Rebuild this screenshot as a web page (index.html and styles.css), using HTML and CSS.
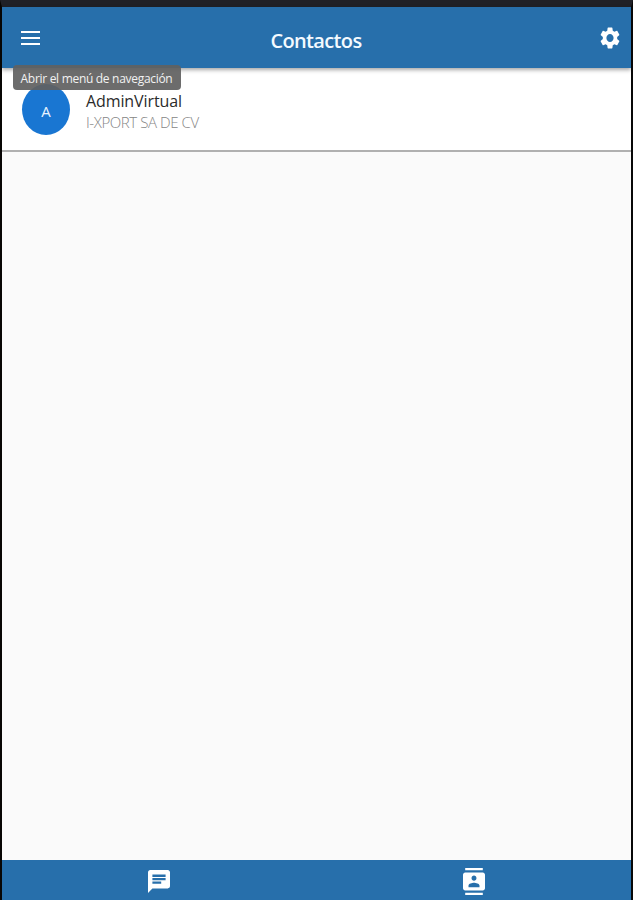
FILE: index.html
```
<!DOCTYPE html>
<html lang="es">
<head>
  <meta charset="UTF-8" />
  <meta name="viewport" content="width=device-width, initial-scale=1.0" />
  <title>Contactos</title>
  <link rel="stylesheet" href="styles.css">
</head>
<body>

<div class="app">
  <header class="appbar">
    <button class="icon-button" aria-label="Abrir el menú de navegación">
      <svg class="icon-menu" viewBox="0 0 18 14" preserveAspectRatio="none"><path d="M0 0h18v2H0zM0 6h18v2H0zM0 12h18v2H0z"/></svg>
    </button>
    <h1>Contactos</h1>
    <button class="icon-button" aria-label="Ajustes">
      <svg class="icon-settings" viewBox="2 2 20 20" preserveAspectRatio="none"><path d="M19.14 12.94c.04-.3.06-.61.06-.94 0-.32-.02-.64-.07-.94l2.03-1.58c.18-.14.23-.41.12-.61l-1.92-3.32c-.12-.22-.37-.29-.59-.22l-2.39.96c-.5-.38-1.03-.7-1.62-.94l-.36-2.54c-.04-.24-.24-.41-.48-.41h-3.84c-.24 0-.43.17-.47.41l-.36 2.54c-.59.24-1.13.57-1.62.94l-2.39-.96c-.22-.08-.47 0-.59.22L2.74 8.87c-.12.21-.08.47.12.61l2.03 1.58c-.05.3-.09.63-.09.94s.02.64.07.94l-2.03 1.58c-.18.14-.23.41-.12.61l1.92 3.32c.12.22.37.29.59.22l2.39-.96c.5.38 1.03.7 1.62.94l.36 2.54c.05.24.24.41.48.41h3.84c.24 0 .44-.17.47-.41l.36-2.54c.59-.24 1.13-.56 1.62-.94l2.39.96c.22.08.47 0 .59-.22l1.92-3.32c.12-.22.07-.47-.12-.61l-2.01-1.58zM12 15.6c-1.98 0-3.6-1.62-3.6-3.6s1.62-3.6 3.6-3.6 3.6 1.62 3.6 3.6-1.62 3.6-3.6 3.6z"/></svg>
    </button>
    <div class="tooltip">Abrir el menú de navegación</div>
  </header>

  <main>
    <div class="contact">
      <div class="avatar">A</div>
      <div class="info">
        <div class="name">AdminVirtual</div>
        <div class="company">I-XPORT SA DE CV</div>
      </div>
    </div>
  </main>

  <nav class="bottom-nav">
    <button class="icon-button" aria-label="Mensajes">
      <svg class="icon-chat" viewBox="2 2 20 20" preserveAspectRatio="none"><path d="M20 2H4c-1.1 0-1.99.9-1.99 2L2 22l4-4h14c1.1 0 2-.9 2-2V4c0-1.1-.9-2-2-2zM6 9h12v2H6V9zm8 5H6v-2h8v2zm4-6H6V6h12v2z"/></svg>
    </button>
    <button class="icon-button" aria-label="Contactos">
      <svg class="icon-contacts" viewBox="2 0 20 24" preserveAspectRatio="none"><path d="M20 0H4v2h16V0zM4 24h16v-2H4v2zM20 4H4c-1.1 0-2 .9-2 2v12c0 1.1.9 2 2 2h16c1.1 0 2-.9 2-2V6c0-1.1-.9-2-2-2zm-8 2.75c1.24 0 2.25 1.01 2.25 2.25s-1.01 2.25-2.25 2.25S9.75 10.24 9.75 9 10.76 6.75 12 6.75zM17 17H7v-1.5c0-1.67 3.33-2.5 5-2.5s5 .83 5 2.5V17z"/></svg>
    </button>
  </nav>
</div>

</body>
</html>
```
FILE: styles.css
```
* {
  box-sizing: border-box;
}
body {
  margin: 0;
  font-family: 'Segoe UI', 'Open Sans', 'Noto Sans', sans-serif;
  background: #000;
}
.app {
  height: 100vh;
  display: flex;
  flex-direction: column;
  border-top: 7px solid #202127;
  border-left: 2px solid #080604;
  border-right: 2px solid #080808;
  background: #fafafa;
}
.icon-button {
  display: flex;
  padding: 0;
  border: none;
  background: none;
}
svg {
  display: block;
  fill: #fff;
}

/* Barra superior */
.appbar {
  position: relative;
  z-index: 1;
  flex: none;
  height: 61px;
  display: flex;
  align-items: center;
  justify-content: space-between;
  padding: 0 11px 0 19px;
  background: #276fab;
  box-shadow: 0 2px 4px rgba(0, 0, 0, 0.35);
}
.appbar h1 {
  margin: 6px 8px 0 0;
  font-size: 20px;
  line-height: 28px;
  font-weight: 600;
  letter-spacing: -0.65px;
  color: #f4faff;
}
.icon-menu {
  width: 19px;
  height: 14px;
}
.icon-settings {
  width: 20px;
  height: 22px;
}
.tooltip {
  position: absolute;
  top: 58px;
  left: 11px;
  width: 168px;
  height: 25px;
  padding-right: 1px;
  border-radius: 4px;
  background: rgba(97, 97, 97, 0.93);
  color: #f2f2f2;
  font-size: 12px;
  line-height: 27px;
  letter-spacing: -0.3px;
  text-align: center;
  white-space: nowrap;
}

/* Lista de contactos */
main {
  flex: 1;
}
.contact {
  display: flex;
  align-items: center;
  height: 84px;
  padding: 0 20px;
  background: #fff;
  border-bottom: 2px solid #b0b0b0;
}
.avatar {
  display: flex;
  align-items: center;
  justify-content: center;
  width: 48px;
  height: 51px;
  padding-top: 3px;
  border-radius: 50%;
  background: #1976d2;
  color: #e9f4ff;
  font-size: 15px;
  font-weight: 500;
}
.info {
  margin: 4px 0 0 16px;
}
.name {
  font-size: 16px;
  line-height: 22px;
  letter-spacing: -0.1px;
  color: #2b2b2b;
}
.company {
  font-size: 15px;
  line-height: 21px;
  font-weight: 300;
  letter-spacing: -0.42px;
  color: #858585;
}

/* Barra inferior */
.bottom-nav {
  flex: none;
  display: grid;
  grid-template-columns: 1fr 1fr;
  height: 40px;
  padding-top: 3px;
  background: #276fab;
}
.bottom-nav .icon-button {
  align-items: center;
  justify-content: center;
}
.icon-chat {
  width: 22px;
  height: 23px;
}
.icon-contacts {
  width: 22px;
  height: 27px;
}
```
